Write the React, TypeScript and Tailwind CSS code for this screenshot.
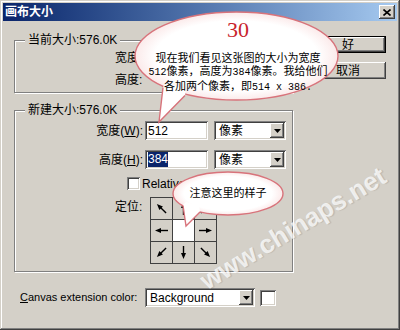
import React from "react";

const raised =
  "shadow-[inset_-1px_-1px_0_#404040,inset_1px_1px_0_#ffffff,inset_-2px_-2px_0_#808080,inset_2px_2px_0_#d4d0c8]";
const sunken =
  "shadow-[inset_1px_1px_0_#808080,inset_-1px_-1px_0_#ffffff,inset_2px_2px_0_#404040,inset_-2px_-2px_0_#d4d0c8]";

const DropArrow = () => (
  <div className={`w-[14px] h-[15px] bg-[#d4d0c8] flex items-center justify-center ${raised}`}>
    <svg width="7" height="4" viewBox="0 0 7 4">
      <polygon points="0,0 7,0 3.5,4" fill="#000" />
    </svg>
  </div>
);

const Select = ({ value, width }: { value: string; width: string }) => (
  <div className={`${width} h-[19px] bg-white flex items-center pl-[5px] pr-[2px] ${sunken}`}>
    <span className="flex-1 leading-none">{value}</span>
    <DropArrow />
  </div>
);

const Arrow = ({ deg }: { deg: number }) => (
  <svg width="21" height="21" viewBox="0 0 21 21">
    <g transform={`rotate(${deg} 10.5 10.5)`}>
      <line x1="4" y1="10.5" x2="13" y2="10.5" stroke="#000" strokeWidth="1.4" />
      <polygon points="17,10.5 11,8 11,13" fill="#000" />
    </g>
  </svg>
);

const anchors: (number | null)[] = [225, 270, 315, 180, null, 0, 135, 90, 45];

// ascii inside the callout is narrower than the CJK text
const A = ({ children }: { children: React.ReactNode }) => (
  <span className="text-[10px] font-['Liberation_Mono',monospace]">{children}</span>
);

export default function App() {
  return (
    <div className="w-[400px] h-[330px] relative overflow-hidden bg-[#d4d0c8] p-[3px] flex flex-col text-[12px] text-black font-['Liberation_Sans','Noto_Sans_CJK_SC',sans-serif] shadow-[inset_-1px_-1px_0_#404040,inset_1px_1px_0_#d4d0c8,inset_-2px_-2px_0_#808080,inset_2px_2px_0_#ffffff]">
      {/* title bar */}
      <div className="h-[18px] flex items-center pl-[2px] pr-[2px] bg-gradient-to-r from-[#0a246a] to-[#a6caf0]">
        <span className="text-white font-bold text-[12px] leading-none">画布大小</span>
        <div className={`ml-auto w-[16px] h-[14px] bg-[#d4d0c8] flex items-center justify-center ${raised}`}>
          <svg width="8" height="7" viewBox="0 0 8 7">
            <path d="M0.5 0.5 L7.5 6.5 M7.5 0.5 L0.5 6.5" stroke="#000" strokeWidth="1.6" />
          </svg>
        </div>
      </div>

      <div className="flex pt-[12px] pl-[11px]">
        {/* left column */}
        <div className="w-[279px] flex flex-col">
          <fieldset className="m-0 min-w-0 border border-[#808080] shadow-[inset_1px_1px_0_#ffffff,1px_1px_0_#ffffff] pb-[3px]">
            <legend className="ml-[10px] px-[3px] leading-[14px] bg-[#d4d0c8]">当前大小:576.0K</legend>
            <div className="flex flex-col gap-[3px] pt-[1px] pl-[100px]">
              <div className="h-[19px] flex items-center">
                <span>宽度:</span>
              </div>
              <div className="h-[19px] flex items-center">
                <span>高度:</span>
              </div>
            </div>
          </fieldset>

          <fieldset className="mt-[10px] m-0 min-w-0 border border-[#808080] shadow-[inset_1px_1px_0_#ffffff,1px_1px_0_#ffffff] pb-[7px]">
            <legend className="ml-[10px] px-[3px] leading-[14px] bg-[#d4d0c8]">新建大小:576.0K</legend>
            <div className="flex flex-col">
              <div className="mt-[4px] h-[19px] flex items-center">
                <span className="w-[128px] text-right">
                  宽度(<span className="underline">W</span>):
                </span>
                <div className={`ml-[2px] w-[63px] h-[19px] bg-white flex items-center pl-[3px] ${sunken}`}>512</div>
                <div className="ml-[6px]">
                  <Select value="像素" width="w-[72px]" />
                </div>
              </div>
              <div className="mt-[10px] h-[19px] flex items-center">
                <span className="w-[128px] text-right">
                  高度(<span className="underline">H</span>):
                </span>
                <div className={`ml-[2px] w-[63px] h-[19px] bg-white flex items-center pl-[3px] ${sunken}`}>
                  <span className="bg-[#0a246a] text-white leading-[15px]">384</span>
                </div>
                <div className="ml-[6px]">
                  <Select value="像素" width="w-[72px]" />
                </div>
              </div>
              <div className="mt-[8px] h-[13px] flex items-center pl-[112px]">
                <div className={`w-[13px] h-[13px] bg-white ${sunken}`} />
                <span className="ml-[2px]">Relative</span>
              </div>
              <div className="mt-[7px] flex pl-[100px]">
                <span className="w-[35px] pt-[1px]">定位:</span>
                <div className="w-[67px] h-[67px] grid grid-cols-3 gap-px p-px bg-[#404040]">
                  {anchors.map((a, i) => (
                    <div key={i} className={a === null ? "bg-white" : "bg-[#d4d0c8]"}>
                      {a !== null && <Arrow deg={a} />}
                    </div>
                  ))}
                </div>
              </div>
            </div>
          </fieldset>
        </div>

        {/* right column */}
        <div className="ml-[17px] pt-[3px] w-[76px] flex flex-col gap-[9px]">
          <div className={`h-[17px] border border-black bg-[#d4d0c8] flex items-center justify-center ${raised}`}>好</div>
          <div className={`h-[17px] bg-[#d4d0c8] flex items-center justify-center ${raised}`}>取消</div>
        </div>
      </div>

      {/* bottom row */}
      <div className="mt-[16px] pl-[17px] flex items-center h-[19px]">
        <span className="w-[125px] text-[11px]">
          <span className="underline">C</span>anvas extension color:
        </span>
        <Select value="Background" width="w-[110px]" />
        <div className={`ml-[5px] w-[16px] h-[16px] bg-white ${sunken}`} />
      </div>

      {/* callouts */}
      <svg className="absolute left-0 top-0 pointer-events-none" width="400" height="330" viewBox="0 0 400 330">
        <defs>
          <radialGradient id="bub" cx="50%" cy="50%" r="50%">
            <stop offset="80%" stopColor="#ffffff" />
            <stop offset="100%" stopColor="#fbeaea" />
          </radialGradient>
        </defs>
        <ellipse cx="236.5" cy="56" rx="101.5" ry="44" fill="url(#bub)" stroke="#d8737b" strokeWidth="1.4" />
        <polygon points="163,87 159,122 185,95 186,89 166,83" fill="#ffffff" />
        <polyline points="163,87.5 159,122 185,95.5" fill="none" stroke="#d8737b" strokeWidth="1.4" />

        <ellipse cx="228" cy="193.5" rx="55" ry="21.5" fill="url(#bub)" stroke="#d8737b" strokeWidth="1.4" />
        <polygon points="183,205 186,226 200,211.5 199,206 186,202" fill="#ffffff" />
        <polyline points="183,205.5 186,226 200,212" fill="none" stroke="#d8737b" strokeWidth="1.4" />
      </svg>

      <div className="absolute left-[135px] top-[17px] w-[206px] flex flex-col items-center pointer-events-none">
        <span className="text-[22px] leading-[26px] text-[#c8242c] font-['Liberation_Serif',serif]">30</span>
        <div className="mt-[8px] flex flex-col items-center text-[11px] leading-[12.5px] font-['Noto_Sans_CJK_SC',sans-serif]">
          <span>现在我们看见这张图的大小为宽度</span>
          <span>
            <A>512</A>像素，高度为<A>384</A>像素。我给他们
          </span>
          <span>
            各加两个像素，即<A>514 x 386.</A>
          </span>
        </div>
      </div>

      <div className="absolute left-[173px] top-[186px] w-[110px] text-center text-[11px] leading-[14px] pointer-events-none">
        注意这里的样子
      </div>

      {/* watermark */}
      <div className="absolute left-[293px] top-[228px] -translate-x-1/2 -translate-y-1/2 -rotate-[31deg] whitespace-nowrap font-bold text-[26px] leading-none text-white/75 font-['Liberation_Sans',sans-serif] [text-shadow:1px_1px_1px_rgba(0,0,0,0.12)] pointer-events-none">
        www.chinaps.net
      </div>
    </div>
  );
}
